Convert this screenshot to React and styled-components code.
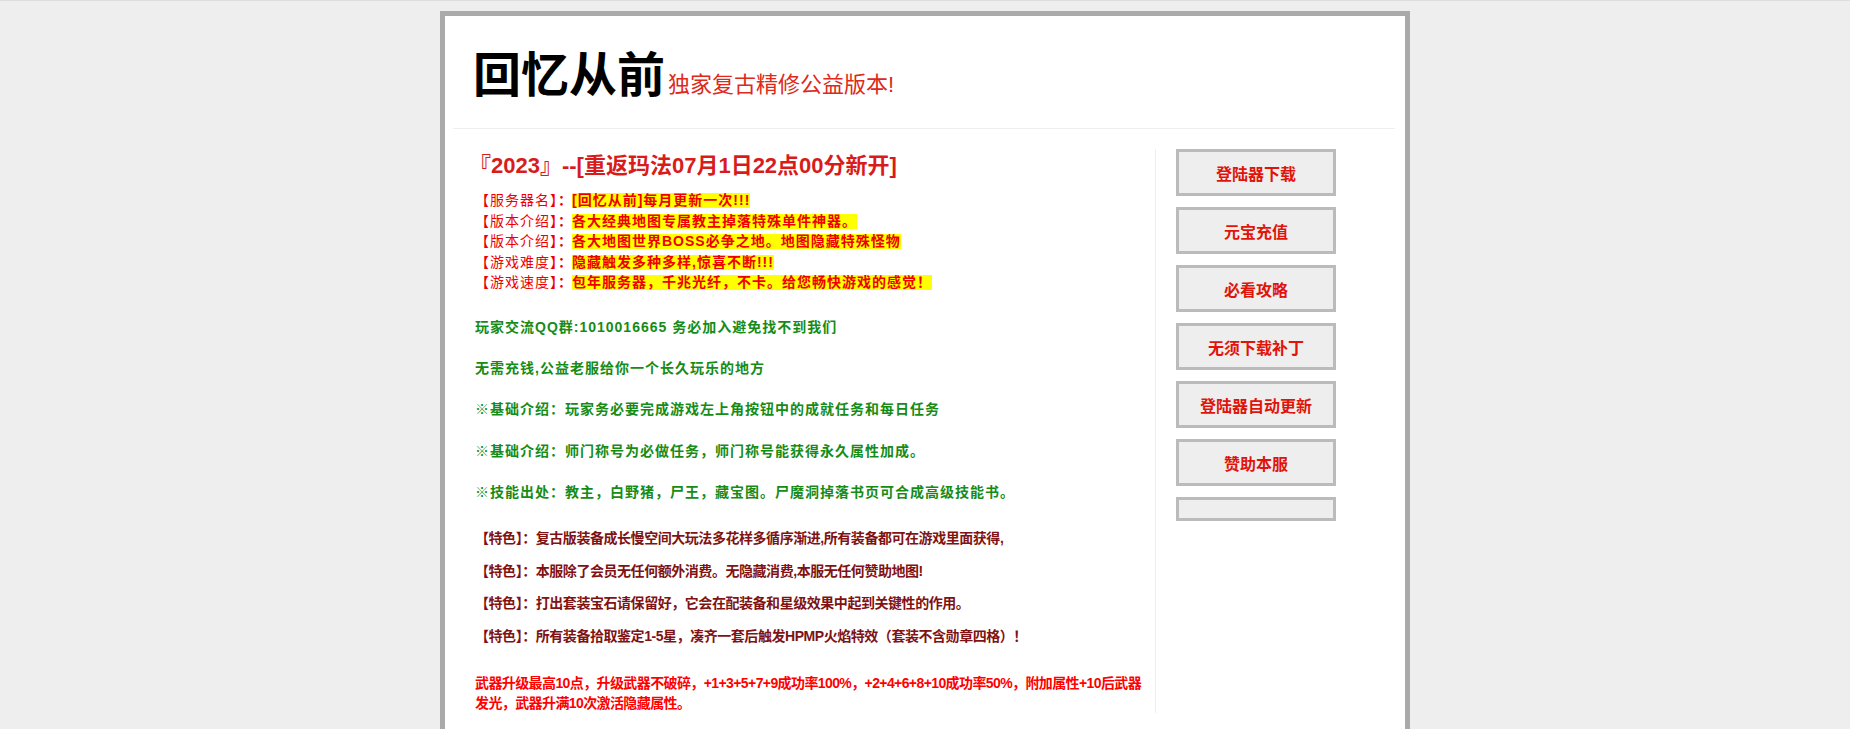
import React from 'react';
import styled, { createGlobalStyle } from 'styled-components';

const GlobalStyle = createGlobalStyle`
  html, body { margin: 0; padding: 0; }
  body {
    background: #eeeeee;
    border-top: 1px solid #dddddd;
    font-family: "Liberation Sans", "Noto Sans CJK SC", sans-serif;
  }
`;

const Page = styled.div`
  width: 960px;
  margin: 10px auto 0;
  border: 5px solid #aaaaaa;
  background: #ffffff;
`;

const Header = styled.header`
  display: flex;
  align-items: baseline;
  margin: 0 10px 0 8px;
  padding: 36px 0 28px 20px;
  border-bottom: 1px solid #eeeeee;
`;

const SiteName = styled.h1`
  margin: 0;
  font-size: 48px;
  line-height: 1;
  font-weight: 700;
  color: #000;
`;

const Slogan = styled.span`
  margin-left: 3px;
  font-size: 22px;
  line-height: 1;
  color: #dd2a1a;
`;

const Main = styled.div`
  display: flex;
  align-items: stretch;
  padding: 20px 0 40px 30px;
`;

const Content = styled.div`
  box-sizing: border-box;
  width: 681px;
  border-right: 1px solid #eeeeee;
`;

const Headline = styled.h2`
  margin: 0 0 0 -6px;
  font-size: 22px;
  line-height: 34px;
  font-weight: 700;
  color: #d81c1c;
`;

const InfoList = styled.div`
  margin-top: 7px;
`;

const InfoRow = styled.div`
  font-size: 14px;
  line-height: 20.6px;
  color: #ee0000;
  white-space: nowrap;
`;

const Label = styled.span`
  letter-spacing: 1px;
`;

const Colon = styled.span`
  font-weight: 700;
`;

const Highlight = styled.span`
  display: inline-block;
  line-height: 15px;
  background: #ffff00;
  font-weight: 700;
  letter-spacing: 1px;
`;

const GreenBlock = styled.div`
  margin-top: 24px;
`;

const GreenLine = styled.p`
  margin: 20.2px 0 0;
  font-size: 14px;
  line-height: 21px;
  font-weight: 700;
  letter-spacing: 1px;
  color: #168c16;
  white-space: nowrap;
  &:first-child { margin-top: 0; }
`;

const FeatureBlock = styled.div`
  margin-top: 25px;
`;

const FeatureLine = styled.p`
  margin: 12.8px 0 0;
  font-size: 14px;
  line-height: 20px;
  font-weight: 700;
  letter-spacing: -0.45px;
  color: #7f1212;
  white-space: nowrap;
  &:first-child { margin-top: 0; }
`;

const Notice = styled.p`
  margin: 26.4px 0 0;
  font-size: 14px;
  line-height: 20px;
  font-weight: 700;
  letter-spacing: -0.6px;
  color: #ff0000;
  white-space: nowrap;
`;

const Sidebar = styled.div`
  display: flex;
  flex-direction: column;
  gap: 11px;
  padding-left: 20px;
`;

const NavButton = styled.a`
  box-sizing: border-box;
  display: flex;
  align-items: center;
  justify-content: center;
  width: 160px;
  height: ${(p) => (p.$empty ? '24px' : '47px')};
  border: 3px solid #bbbbbb;
  background: #eeeeee;
  color: #e0140a;
  font-size: 16px;
  font-weight: 700;
  text-decoration: none;
  cursor: pointer;
`;

const info = [
  ['【服务器名】', '[回忆从前]每月更新一次!!!'],
  ['【版本介绍】', '各大经典地图专属教主掉落特殊单件神器。'],
  ['【版本介绍】', '各大地图世界BOSS必争之地。地图隐藏特殊怪物'],
  ['【游戏难度】', '隐藏触发多种多样,惊喜不断!!!'],
  ['【游戏速度】', '包年服务器，千兆光纤，不卡。给您畅快游戏的感觉！'],
];

const greens = [
  '玩家交流QQ群:1010016665 务必加入避免找不到我们',
  '无需充钱,公益老服给你一个长久玩乐的地方',
  '※基础介绍：玩家务必要完成游戏左上角按钮中的成就任务和每日任务',
  '※基础介绍：师门称号为必做任务，师门称号能获得永久属性加成。',
  '※技能出处：教主，白野猪，尸王，藏宝图。尸魔洞掉落书页可合成高级技能书。',
];

const features = [
  '复古版装备成长慢空间大玩法多花样多循序渐进,所有装备都可在游戏里面获得,',
  '本服除了会员无任何额外消费。无隐藏消费,本服无任何赞助地图!',
  '打出套装宝石请保留好，它会在配装备和星级效果中起到关键性的作用。',
  '所有装备拾取鉴定1-5星，凑齐一套后触发HPMP火焰特效（套装不含勋章四格）！',
];

const buttons = ['登陆器下载', '元宝充值', '必看攻略', '无须下载补丁', '登陆器自动更新', '赞助本服'];

export default function App() {
  return (
    <>
      <GlobalStyle />
      <Page>
        <Header>
          <SiteName>回忆从前</SiteName>
          <Slogan>独家复古精修公益版本!</Slogan>
        </Header>
        <Main>
          <Content>
            <Headline>『2023』--[重返玛法07月1日22点00分新开]</Headline>
            <InfoList>
              {info.map(([label, value], i) => (
                <InfoRow key={i}>
                  <Label>{label}</Label>
                  <Colon>：</Colon>
                  <Highlight>{value}</Highlight>
                </InfoRow>
              ))}
            </InfoList>
            <GreenBlock>
              {greens.map((t, i) => (
                <GreenLine key={i}>{t}</GreenLine>
              ))}
            </GreenBlock>
            <FeatureBlock>
              {features.map((t, i) => (
                <FeatureLine key={i}>【特色】：{t}</FeatureLine>
              ))}
            </FeatureBlock>
            <Notice>
              武器升级最高10点，升级武器不破碎，+1+3+5+7+9成功率100%，+2+4+6+8+10成功率50%，附加属性+10后武器
              <br />
              发光，武器升满10次激活隐藏属性。
            </Notice>
          </Content>
          <Sidebar>
            {buttons.map((b) => (
              <NavButton key={b}>{b}</NavButton>
            ))}
            <NavButton $empty />
          </Sidebar>
        </Main>
      </Page>
    </>
  );
}
